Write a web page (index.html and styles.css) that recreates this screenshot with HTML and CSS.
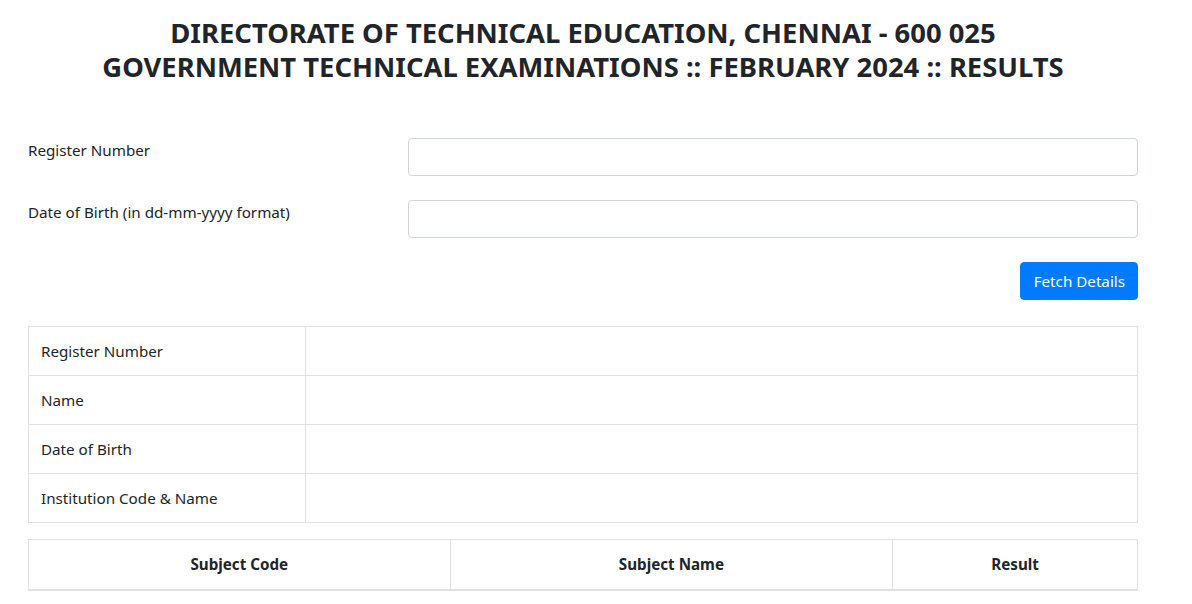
FILE: index.html
```html
<!DOCTYPE html>
<html lang="en">
<head>
<meta charset="utf-8">
<title>DOTE Results</title>
<link rel="stylesheet" href="styles.css">
</head>
<body>
<div class="container">
  <h3 class="title">DIRECTORATE OF TECHNICAL EDUCATION, CHENNAI - 600 025<br>GOVERNMENT TECHNICAL EXAMINATIONS :: FEBRUARY 2024 :: RESULTS</h3>
  <form class="form">
    <div class="form-row">
      <label class="label" for="regno">Register Number</label>
      <input class="input" id="regno" type="text">
    </div>
    <div class="form-row">
      <label class="label" for="dob">Date of Birth (in dd-mm-yyyy format)</label>
      <input class="input" id="dob" type="text">
    </div>
    <div class="actions">
      <button class="btn" type="button">Fetch Details</button>
    </div>
  </form>
  <table class="table info">
    <tbody>
      <tr><td class="key">Register Number</td><td></td></tr>
      <tr><td class="key">Name</td><td></td></tr>
      <tr><td class="key">Date of Birth</td><td></td></tr>
      <tr><td class="key">Institution Code &amp; Name</td><td></td></tr>
    </tbody>
  </table>
  <table class="table marks">
    <thead>
      <tr><th class="c1">Subject Code</th><th class="c2">Subject Name</th><th class="c3">Result</th></tr>
    </thead>
  </table>
</div>
</body>
</html>
```
FILE: styles.css
```css
html, body {
  margin: 0;
  padding: 0;
  background: #fff;
}
body {
  font-family: "Noto Sans", "Open Sans", sans-serif;
  font-size: 15.2px;
  line-height: 24px;
  color: #212529;
}
.container {
  width: 1110px;
  margin-left: 28px;
}
.title {
  margin: 0;
  padding-top: 16px;
  font-size: 27.4px;
  line-height: 34px;
  font-weight: 700;
  text-align: center;
}
.form {
  margin-top: 54px;
}
.form-row {
  display: flex;
  margin-bottom: 24px;
}
.label {
  width: 380px;
  flex: none;
}
.input {
  flex: 1;
  height: 38px;
  box-sizing: border-box;
  border: 1px solid #ced4da;
  border-radius: 4px;
  padding: 6px 12px;
  font: inherit;
  color: #495057;
  outline: none;
}
.actions {
  display: flex;
  justify-content: flex-end;
  margin-bottom: 26px;
}
.btn {
  height: 38px;
  padding: 6px 12px 6px 13px;
  background: #007bff;
  color: #fff;
  border: 1px solid #007bff;
  border-radius: 4px;
  font: inherit;
}
.table {
  width: 100%;
  border-collapse: collapse;
  margin-bottom: 16px;
}
.table td, .table th {
  border: 1px solid #dee2e6;
  padding: 12px;
  height: 48px;
  box-sizing: border-box;
  vertical-align: top;
}
.info td.key {
  width: 25%;
}
.marks th {
  text-align: center;
  font-weight: 700;
  border-bottom-width: 2px;
  height: 50px;
}
.marks .c1 { width: 422px; }
.marks .c2 { width: 443px; }
.marks .c3 { width: 245px; }
```
